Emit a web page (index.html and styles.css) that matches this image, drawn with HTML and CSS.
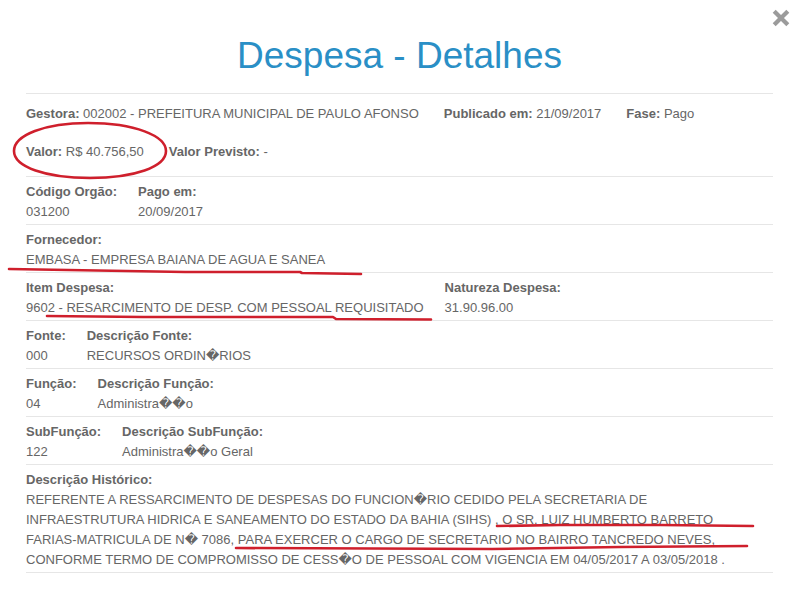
FILE: index.html
```html
<!DOCTYPE html>
<html lang="pt-BR">
<head>
    <meta charset="UTF-8">
    <meta name="viewport" content="width=device-width, initial-scale=1.0">
    <title>Despesa - Detalhes</title>
    <link rel="stylesheet" href="styles.css">
</head>
<body>
    <div class="modal">
        <button class="close" aria-label="Fechar">
            <svg width="18" height="18" viewBox="0 0 18 18">
                <path d="M2.2 2.2 L15.8 15.8 M15.8 2.2 L2.2 15.8" stroke="#9b9b9b" stroke-width="4.2" fill="none"/>
            </svg>
        </button>

        <div class="modal-header">
            <h1 class="title">Despesa - Detalhes</h1>
        </div>

        <div class="details">
            <div class="section section-top">
                <div class="inline-row">
                    <span><b>Gestora:</b> 002002 - PREFEITURA MUNICIPAL DE PAULO AFONSO</span>
                    <span><b>Publicado em:</b> 21/09/2017</span>
                    <span><b>Fase:</b> Pago</span>
                </div>
                <div class="inline-row">
                    <span><b>Valor:</b> R$ 40.756,50</span>
                    <span><b>Valor Previsto:</b> -</span>
                </div>
            </div>

            <div class="section">
                <div class="field"><div class="label">Código Orgão:</div><div>031200</div></div>
                <div class="field"><div class="label">Pago em:</div><div>20/09/2017</div></div>
            </div>

            <div class="section">
                <div class="field"><div class="label">Fornecedor:</div><div>EMBASA - EMPRESA BAIANA DE AGUA E SANEA</div></div>
            </div>

            <div class="section">
                <div class="field"><div class="label">Item Despesa:</div><div>9602 - RESARCIMENTO DE DESP. COM PESSOAL REQUISITADO</div></div>
                <div class="field"><div class="label">Natureza Despesa:</div><div>31.90.96.00</div></div>
            </div>

            <div class="section">
                <div class="field"><div class="label">Fonte:</div><div>000</div></div>
                <div class="field"><div class="label">Descrição Fonte:</div><div>RECURSOS ORDIN&#xFFFD;RIOS</div></div>
            </div>

            <div class="section">
                <div class="field"><div class="label">Função:</div><div>04</div></div>
                <div class="field"><div class="label">Descrição Função:</div><div>Administra&#xFFFD;&#xFFFD;o</div></div>
            </div>

            <div class="section">
                <div class="field"><div class="label">SubFunção:</div><div>122</div></div>
                <div class="field"><div class="label">Descrição SubFunção:</div><div>Administra&#xFFFD;&#xFFFD;o Geral</div></div>
            </div>

            <div class="section section-last">
                <div class="field field-wide">
                    <div class="label">Descrição Histórico:</div>
                    <div>REFERENTE A RESSARCIMENTO DE DESPESAS DO FUNCION&#xFFFD;RIO CEDIDO PELA SECRETARIA DE INFRAESTRUTURA HIDRICA E SANEAMENTO DO ESTADO DA BAHIA (SIHS) , O SR. LUIZ HUMBERTO BARRETO FARIAS-MATRICULA DE N&#xFFFD; 7086, PARA EXERCER O CARGO DE SECRETARIO NO BAIRRO TANCREDO NEVES, CONFORME TERMO DE COMPROMISSO DE CESS&#xFFFD;O DE PESSOAL COM VIGENCIA EM 04/05/2017 A 03/05/2018 .</div>
                </div>
            </div>
        </div>

        <!-- marcacoes em vermelho feitas sobre a captura -->
        <svg class="marks" width="799" height="606" viewBox="0 0 799 606">
            <g fill="none" stroke="#cf1f2c" stroke-width="2.6" stroke-linecap="round" stroke-linejoin="round">
                <path d="M14 151 C14 135 45 123 88 123 C135 123 166 136 166 151 C166 167 134 178 90 178 C46 178 14 167 14 151 Z"/>
                <path d="M9 269 L68 270 L185 272 L300 272 L302 273 L361 274"/>
                <path d="M47 316 L143 317 L333 317 L336 319 L431 319.5"/>
                <path d="M497 526 L560 525 L660 525 L753 526"/>
                <path d="M236 548 L492 549 L620 547 L747 546"/>
            </g>
        </svg>
    </div>
</body>
</html>
```

FILE: styles.css
```css
body {
    margin: 0;
    background: white;
    font-family: "Liberation Sans", Arial, "DejaVu Sans", sans-serif;
    font-size: 13px;
    line-height: 20px;
    color: #666;
}
.modal {
    position: relative;
    width: 799px;
    height: 606px;
    padding: 0 26px;
    box-sizing: border-box;
}
.close {
    position: absolute;
    top: 9px;
    right: 9px;
    padding: 0;
    border: none;
    background: none;
    width: 18px;
    height: 18px;
    cursor: pointer;
}
.close svg {
    display: block;
}
.modal-header {
    padding: 34px 0 15px;
}
.title {
    margin: 0;
    font-size: 37px;
    line-height: 44px;
    font-weight: normal;
    color: #2a8fc6;
    text-align: center;
}
.section {
    display: flex;
    gap: 21px;
    border-top: 1px solid #e6e6e6;
    padding: 5px 0 2px;
}
.section-top {
    flex-direction: column;
    gap: 18px;
    padding: 10px 0 14px;
}
.section-last {
    border-bottom: 1px solid #e6e6e6;
}
.field-wide {
    flex: 1;
    padding-right: 15px;
}
.inline-row {
    display: flex;
    gap: 25px;
}
.label,
b {
    font-weight: bold;
}
.marks {
    position: absolute;
    top: 0;
    left: 0;
    pointer-events: none;
}
```
